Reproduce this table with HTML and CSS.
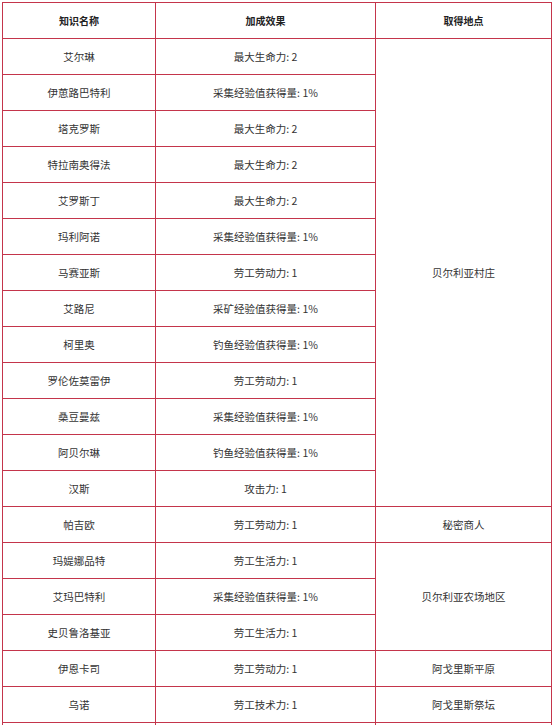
FILE: index.html
```html
<!DOCTYPE html>
<html lang="zh-CN">
<head>
<meta charset="utf-8">
<title>知识</title>
<link rel="stylesheet" href="styles.css">
</head>
<body>
<table class="kt">
<colgroup><col class="c1"><col class="c2"><col class="c3"></colgroup>
<thead>
<tr><th>知识名称</th><th>加成效果</th><th>取得地点</th></tr>
</thead>
<tbody>
<tr><td>艾尔琳</td><td>最大生命力: 2</td><td rowspan="13">贝尔利亚村庄</td></tr>
<tr><td>伊葸路巴特利</td><td>采集经验值获得量: 1%</td></tr>
<tr><td>塔克罗斯</td><td>最大生命力: 2</td></tr>
<tr><td>特拉南奥得法</td><td>最大生命力: 2</td></tr>
<tr><td>艾罗斯丁</td><td>最大生命力: 2</td></tr>
<tr><td>玛利阿诺</td><td>采集经验值获得量: 1%</td></tr>
<tr><td>马赛亚斯</td><td>劳工劳动力: 1</td></tr>
<tr><td>艾路尼</td><td>采矿经验值获得量: 1%</td></tr>
<tr><td>柯里奥</td><td>钓鱼经验值获得量: 1%</td></tr>
<tr><td>罗伦佐莫雷伊</td><td>劳工劳动力: 1</td></tr>
<tr><td>桑豆曼兹</td><td>采集经验值获得量: 1%</td></tr>
<tr><td>阿贝尔琳</td><td>钓鱼经验值获得量: 1%</td></tr>
<tr><td>汉斯</td><td>攻击力: 1</td></tr>
<tr><td>帕吉欧</td><td>劳工劳动力: 1</td><td>秘密商人</td></tr>
<tr><td>玛媞娜品特</td><td>劳工生活力: 1</td><td rowspan="3">贝尔利亚农场地区</td></tr>
<tr><td>艾玛巴特利</td><td>采集经验值获得量: 1%</td></tr>
<tr><td>史贝鲁洛基亚</td><td>劳工生活力: 1</td></tr>
<tr><td>伊恩卡司</td><td>劳工劳动力: 1</td><td>阿戈里斯平原</td></tr>
<tr><td>乌诺</td><td>劳工技术力: 1</td><td>阿戈里斯祭坛</td></tr>
<tr><td></td><td></td><td></td></tr>
</tbody>
</table>
</body>
</html>
```
FILE: styles.css
```css
html, body {
  margin: 0;
  background: #fff;
}
body {
  padding: 2px;
  font-family: "Noto Sans CJK SC", "Noto Sans", sans-serif;
  color: #333;
}
.kt {
  border-collapse: collapse;
  table-layout: fixed;
  width: 549px;
}
.kt .c1 { width: 153px; }
.kt .c2 { width: 220px; }
.kt .c3 { width: 176px; }
.kt th, .kt td {
  border: 1px solid #c4354b;
  text-align: center;
  vertical-align: middle;
  padding: 0;
  height: 35px;
  font-size: 10.5px;
  font-weight: normal;
  line-height: 14px;
}
.kt th {
  font-weight: bold;
  font-size: 10px;
  color: #222;
}
```
